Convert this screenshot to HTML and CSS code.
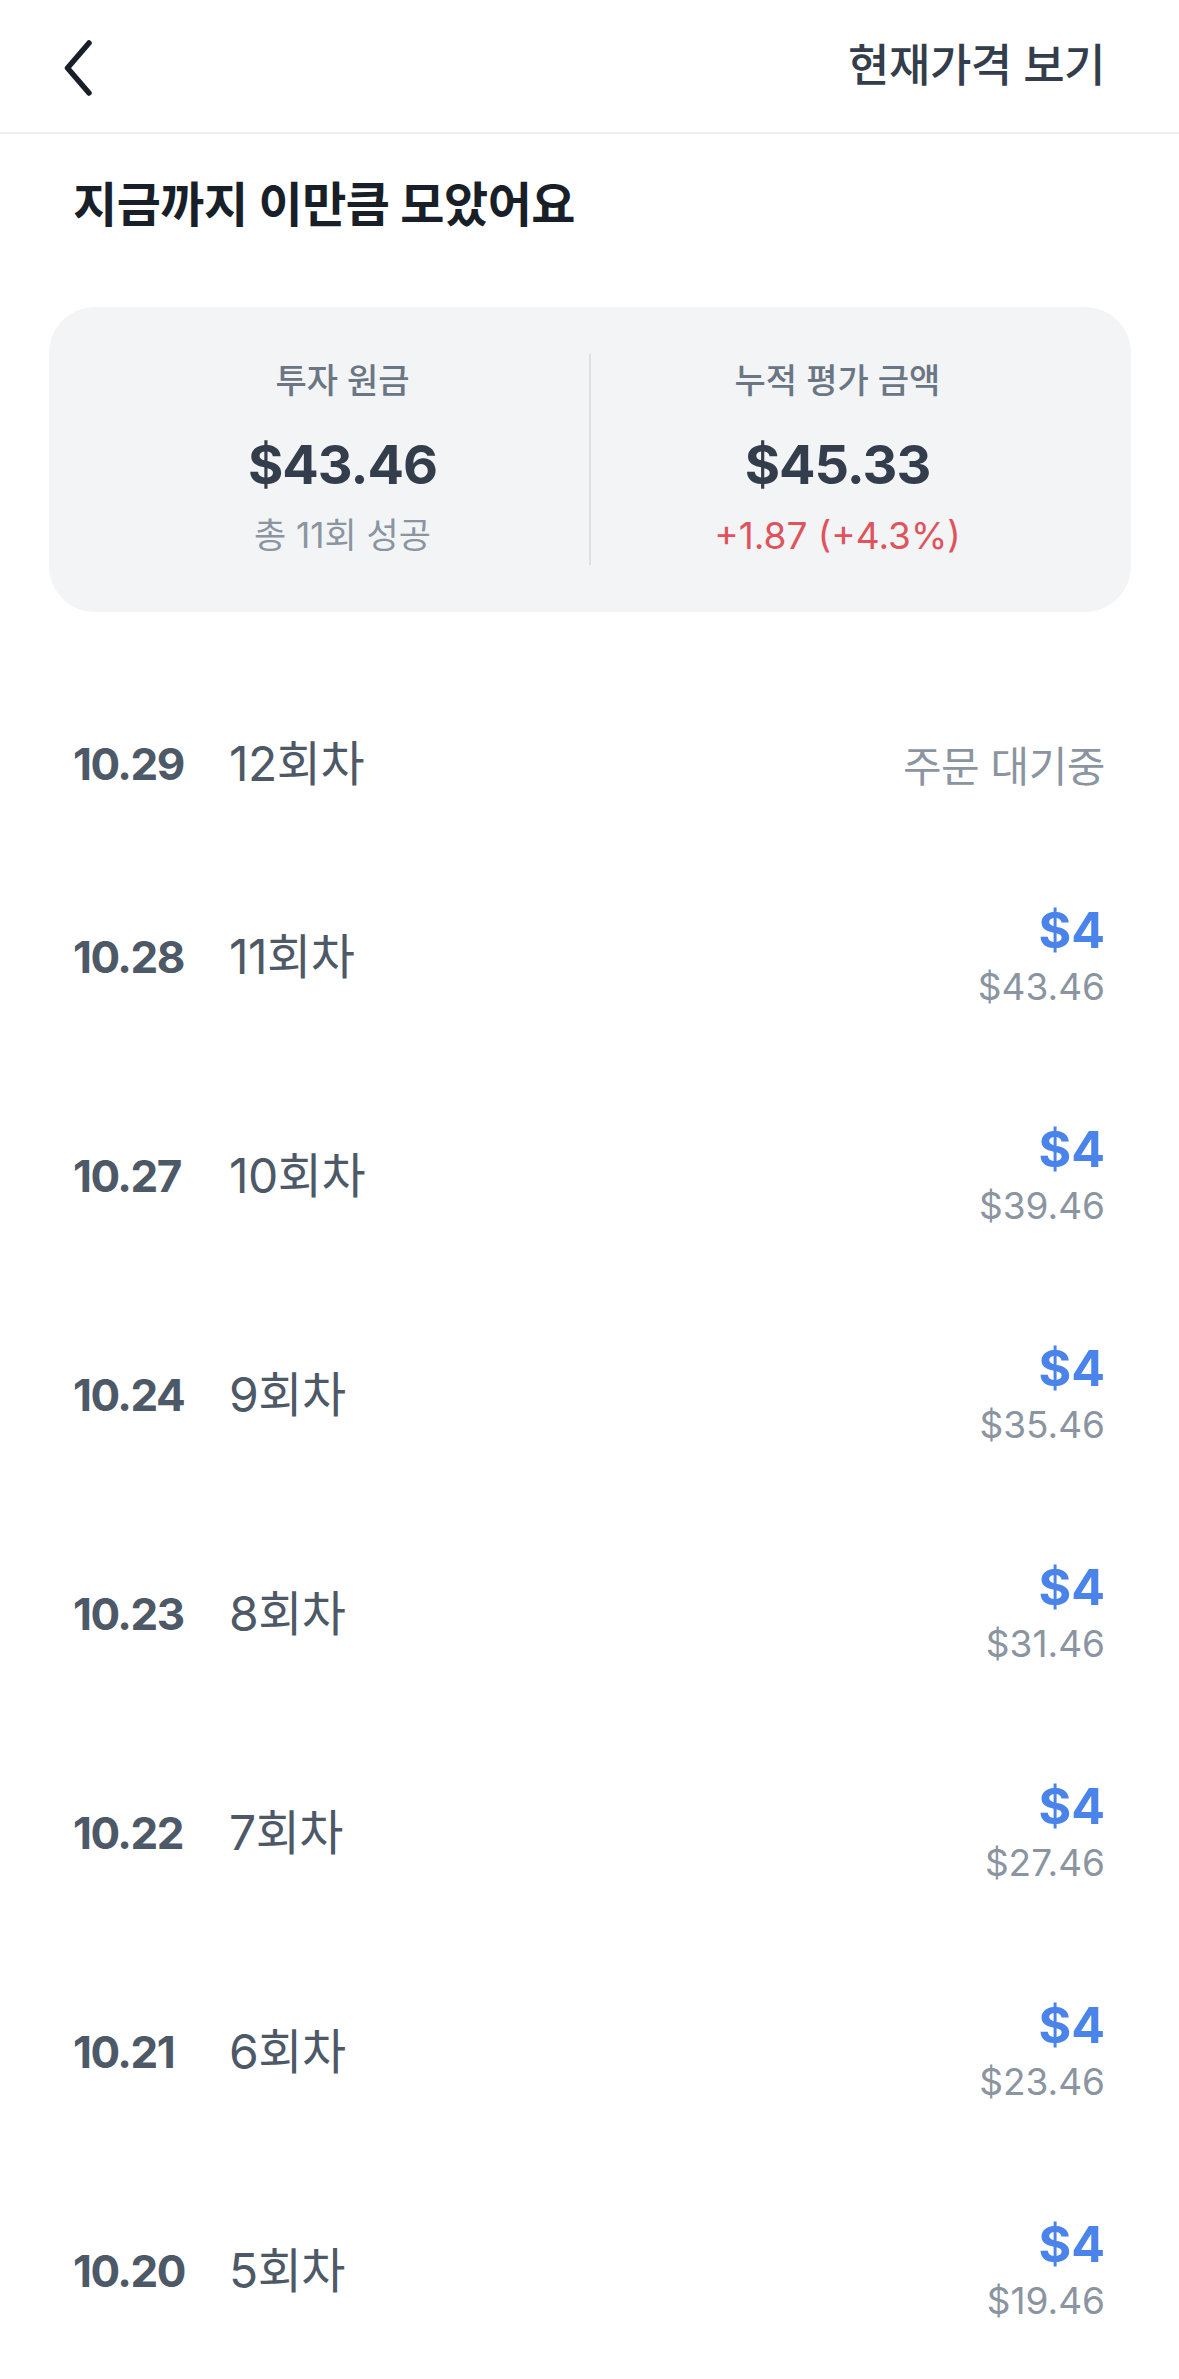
FILE: index.html
```html
<!DOCTYPE html>
<html lang="ko">
<head>
<meta charset="utf-8">
<title>지금까지 이만큼 모았어요</title>
<link rel="stylesheet" href="styles.css">
</head>
<body>
<header class="topbar">
  <button class="back" aria-label="뒤로">
    <svg width="40" height="60" viewBox="0 0 40 60" aria-hidden="true">
      <polyline points="31,7 9.5,32 31,57" fill="none" stroke="#191f28" stroke-width="5.5" stroke-linecap="round" stroke-linejoin="round"/>
    </svg>
  </button>
  <span class="topbar-link">현재가격 보기</span>
</header>

<main class="content">
  <h1 class="title">지금까지 이만큼 모았어요</h1>

  <section class="summary">
    <div class="summary-col">
      <div class="summary-label">투자 원금</div>
      <div class="summary-value">$43.46</div>
      <div class="summary-sub">총 11회 성공</div>
    </div>
    <div class="summary-divider"></div>
    <div class="summary-col">
      <div class="summary-label">누적 평가 금액</div>
      <div class="summary-value">$45.33</div>
      <div class="summary-sub up">+1.87 (+4.3%)</div>
    </div>
  </section>

  <ul class="history">
    <li class="row single">
      <span class="date">10.29</span>
      <span class="round">12회차</span>
      <span class="status">주문 대기중</span>
    </li>
    <li class="row">
      <span class="date">10.28</span>
      <span class="round">11회차</span>
      <span class="amounts"><span class="amount">$4</span><span class="total">$43.46</span></span>
    </li>
    <li class="row">
      <span class="date">10.27</span>
      <span class="round">10회차</span>
      <span class="amounts"><span class="amount">$4</span><span class="total">$39.46</span></span>
    </li>
    <li class="row">
      <span class="date">10.24</span>
      <span class="round">9회차</span>
      <span class="amounts"><span class="amount">$4</span><span class="total">$35.46</span></span>
    </li>
    <li class="row">
      <span class="date">10.23</span>
      <span class="round">8회차</span>
      <span class="amounts"><span class="amount">$4</span><span class="total">$31.46</span></span>
    </li>
    <li class="row">
      <span class="date">10.22</span>
      <span class="round">7회차</span>
      <span class="amounts"><span class="amount">$4</span><span class="total">$27.46</span></span>
    </li>
    <li class="row">
      <span class="date">10.21</span>
      <span class="round">6회차</span>
      <span class="amounts"><span class="amount">$4</span><span class="total">$23.46</span></span>
    </li>
    <li class="row">
      <span class="date">10.20</span>
      <span class="round">5회차</span>
      <span class="amounts"><span class="amount">$4</span><span class="total">$19.46</span></span>
    </li>
  </ul>
</main>
</body>
</html>
```

FILE: styles.css
```css
* {
  box-sizing: border-box;
}

html, body {
  margin: 0;
  padding: 0;
  background: #ffffff;
}

body {
  font-family: Inter, "Noto Sans CJK KR", sans-serif;
  color: #191f28;
  width: 1179px;
  overflow: hidden;
}

.topbar {
  height: 134px;
  display: flex;
  align-items: center;
  justify-content: space-between;
  padding: 0 74px 0 58px;
  border-bottom: 2px solid #eceef0;
}

.back {
  display: flex;
  align-items: center;
  justify-content: center;
  padding: 0;
  margin: 0;
  border: 0;
  background: none;
  width: 40px;
  height: 60px;
}

.topbar-link {
  font-size: 45px;
  font-weight: 500;
  letter-spacing: -0.5px;
  color: #333d4b;
  line-height: 60px;
}

.content {
  padding: 39px 0 0;
}

.title {
  margin: 0 0 70px;
  padding: 0 73px;
  font-size: 48px;
  font-weight: 700;
  letter-spacing: -0.5px;
  line-height: 64px;
  color: #191f28;
}

.summary {
  margin: 0 48px 0 49px;
  background: #f2f4f6;
  border-radius: 46px;
  padding: 47px 47px;
  display: flex;
  align-items: stretch;
}

.summary-col {
  flex: 1;
  display: flex;
  flex-direction: column;
  align-items: center;
  text-align: center;
}

.summary-divider {
  width: 2px;
  background: #dde1e6;
}

.summary-label {
  font-size: 34px;
  font-weight: 500;
  line-height: 54px;
  color: #6b7684;
}

.summary-value {
  margin-top: 24px;
  font-size: 54px;
  font-weight: 700;
  line-height: 66px;
  letter-spacing: -1px;
  color: #333d4b;
}

.summary-sub {
  margin-top: 8px;
  font-size: 35px;
  font-weight: 400;
  line-height: 59px;
  color: #8b95a1;
}

.summary-sub.up {
  font-size: 37px;
  color: #e0535b;
}

.history {
  list-style: none;
  margin: 68px 0 0;
  padding: 0;
}

.row {
  display: flex;
  align-items: center;
  padding: 54px 74px 54px 73px;
  height: 219px;
}

.row.single {
  height: 167px;
}

.date {
  width: 156px;
  flex: none;
  font-size: 44px;
  font-weight: 700;
  letter-spacing: -1.5px;
  color: #4e5968;
}

.round {
  flex: 1;
  font-size: 48px;
  font-weight: 400;
  letter-spacing: -0.5px;
  color: #4e5968;
  line-height: 59px;
}

.status {
  font-size: 42px;
  font-weight: 400;
  letter-spacing: -0.5px;
  color: #8b95a1;
}

.amounts {
  display: flex;
  flex-direction: column;
  align-items: flex-end;
  gap: 3px;
}

.amount {
  font-size: 50px;
  font-weight: 700;
  line-height: 58px;
  color: #4a84ea;
}

.total {
  font-size: 37px;
  font-weight: 400;
  line-height: 50px;
  color: #8b95a1;
}
```
